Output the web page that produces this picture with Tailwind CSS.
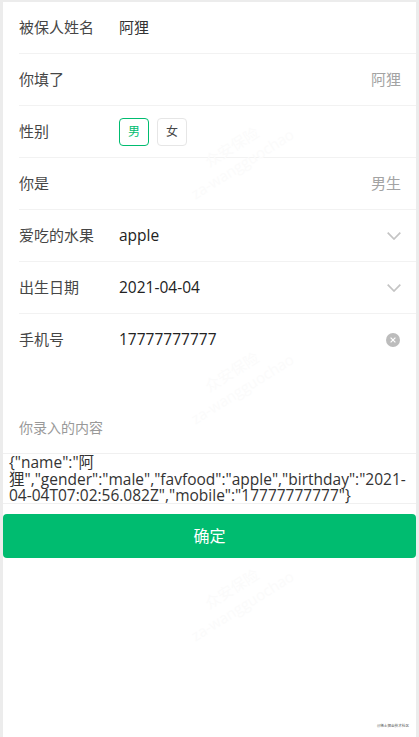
<!DOCTYPE html>
<html lang="zh-CN">
<head>
  <meta charset="UTF-8" />
  <title>表单</title>
  <script src="https://cdn.jsdelivr.net/npm/@tailwindcss/browser@4"></script>
</head>
<body class="bg-white overflow-hidden">
  <div class="relative h-[737px] w-[419px] overflow-hidden border-x-[3px] border-t-2 border-[#ececec] bg-white text-[15px] text-[#464646] font-['Open_Sans','Noto_Sans_CJK_SC',sans-serif]">

    <div class="pl-4">
      <div class="flex h-[52px] items-center border-b border-[#f2f2f2]">
        <span class="w-[100px]">被保人姓名</span>
        <span class="text-[#333]">阿狸</span>
      </div>
      <div class="flex h-[52px] items-center justify-between border-b border-[#f2f2f2] pr-[15px]">
        <span>你填了</span>
        <span class="text-[#a3a3a3]">阿狸</span>
      </div>
      <div class="flex h-[52px] items-center border-b border-[#f2f2f2]">
        <span class="w-[100px]">性别</span>
        <span class="flex h-7 w-[30px] items-center justify-center rounded border border-[#00bc70] text-xs text-[#00bc70]">男</span>
        <span class="ml-2 flex h-7 w-[30px] items-center justify-center rounded border border-[#e6e6e6] text-xs text-[#464646]">女</span>
      </div>
      <div class="flex h-[52px] items-center justify-between border-b border-[#f2f2f2] pr-[15px]">
        <span>你是</span>
        <span class="text-[#a3a3a3]">男生</span>
      </div>
      <div class="flex h-[52px] items-center justify-between border-b border-[#f2f2f2] pr-[15px]">
        <span class="flex"><span class="w-[100px]">爱吃的水果</span><span class="text-[15.5px] text-[#222]">apple</span></span>
        <svg class="h-2 w-[14px]" viewBox="0 0 14 8" fill="none" stroke="#c4c4c4" stroke-width="1.7"><path d="M.7.7 7 7 13.3.7"/></svg>
      </div>
      <div class="flex h-[52px] items-center justify-between border-b border-[#f2f2f2] pr-[15px]">
        <span class="flex"><span class="w-[100px]">出生日期</span><span class="text-[15.5px] text-[#222]">2021-04-04</span></span>
        <svg class="h-2 w-[14px]" viewBox="0 0 14 8" fill="none" stroke="#c4c4c4" stroke-width="1.7"><path d="M.7.7 7 7 13.3.7"/></svg>
      </div>
      <div class="flex h-[52px] items-center justify-between pr-4">
        <span class="flex"><span class="w-[100px]">手机号</span><span class="text-[15.5px] text-[#222]">17777777777</span></span>
        <svg class="h-[14px] w-[14px]" viewBox="0 0 14 14"><circle cx="7" cy="7" r="7" fill="#bcbcbc"/><path d="m4.6 4.6 4.8 4.8m0-4.8-4.8 4.8" stroke="#fff" stroke-width="1.2"/></svg>
      </div>
    </div>

    <div class="flex h-[88px] items-end border-b border-[#f0f0f0] pb-[15px] pl-4 text-sm text-[#999]">你录入的内容</div>

    <div class="h-[50px] break-words border-b border-[#f0f0f0] pl-[6px] text-[15.5px] leading-[16.7px] text-[#333]">{"name":"阿狸","gender":"male","favfood":"apple","birthday":"2021-04-04T07:02:56.082Z","mobile":"17777777777"}</div>

    <div class="mt-[10px] flex h-11 items-center justify-center rounded bg-[#00bc70] text-base text-white">确定</div>

    <!-- faint watermark -->
    <p class="absolute left-[175px] top-[133px] -rotate-[32deg] text-center leading-5 text-[#fbfbfb] pointer-events-none">众安保险<br />za-wangguochao</p>
    <p class="absolute left-[175px] top-[358px] -rotate-[32deg] text-center leading-5 text-[#fbfbfb] pointer-events-none">众安保险<br />za-wangguochao</p>
    <p class="absolute left-[175px] top-[575px] -rotate-[32deg] text-center leading-5 text-[#fbfbfb] pointer-events-none">众安保险<br />za-wangguochao</p>

    <span class="absolute bottom-[9px] right-[7px] text-[3.6px] leading-none text-[#555]">@稀土掘金技术社区</span>
  </div>
</body>
</html>
